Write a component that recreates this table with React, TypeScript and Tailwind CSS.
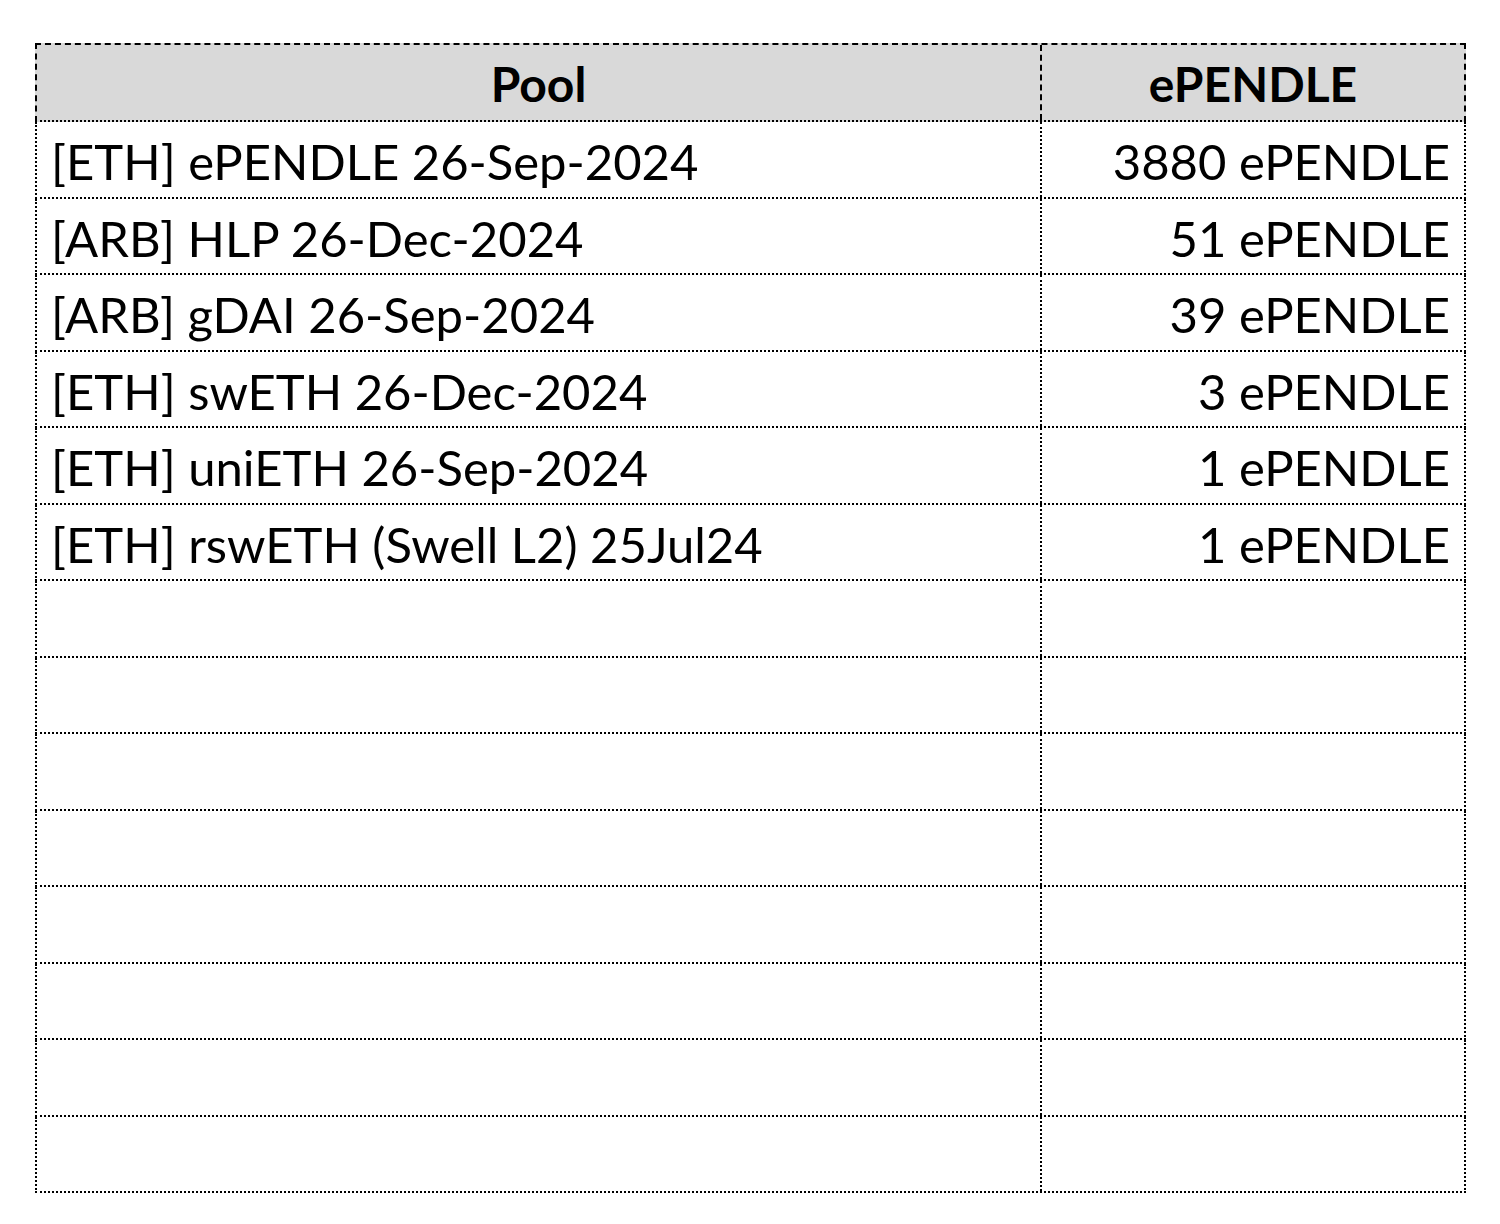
const rows: [string, string][] = [
  ['[ETH] ePENDLE 26-Sep-2024', '3880 ePENDLE'],
  ['[ARB] HLP 26-Dec-2024', '51 ePENDLE'],
  ['[ARB] gDAI 26-Sep-2024', '39 ePENDLE'],
  ['[ETH] swETH 26-Dec-2024', '3 ePENDLE'],
  ['[ETH] uniETH 26-Sep-2024', '1 ePENDLE'],
  ['[ETH] rswETH (Swell L2) 25Jul24', '1 ePENDLE'],
  ['', ''],
  ['', ''],
  ['', ''],
  ['', ''],
  ['', ''],
  ['', ''],
  ['', ''],
  ['', ''],
];

export default function App() {
  return (
    <div className="min-h-[1224px] w-[1500px] bg-white pt-[43px] pl-[35px] font-['Lato','Liberation_Sans',sans-serif] text-black">
      <div className="w-[1431px]">
        {/* header */}
        <div className="grid h-[79px] grid-cols-[1005px_1fr] border-2 border-dashed border-black [border-bottom-style:dotted] bg-[#d9d9d9] text-[48px] font-bold leading-none">
          <div className="flex items-center justify-center border-r-2 border-dashed border-black pt-[3px]">Pool</div>
          <div className="flex items-center justify-center pt-[3px]">ePENDLE</div>
        </div>

        {/* body */}
        {rows.map(([pool, amount], i) => (
          <div
            key={i}
            className="grid h-[76.5px] grid-cols-[1005px_1fr] border-x-2 border-b-2 border-dotted border-black text-[49px] leading-none"
          >
            <div className="flex items-center border-r-2 border-dotted border-black pl-[14px] pt-[5px]">{pool}</div>
            <div className="flex items-center justify-end pr-[14px] pt-[5px]">{amount}</div>
          </div>
        ))}
      </div>
    </div>
  );
}
